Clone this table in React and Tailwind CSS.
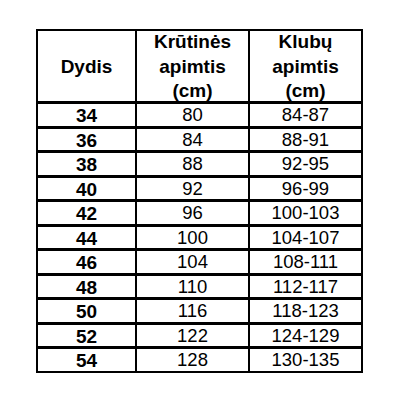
import React from "react";

const rows = [
  ["34", "80", "84-87"],
  ["36", "84", "88-91"],
  ["38", "88", "92-95"],
  ["40", "92", "96-99"],
  ["42", "96", "100-103"],
  ["44", "100", "104-107"],
  ["46", "104", "108-111"],
  ["48", "110", "112-117"],
  ["50", "116", "118-123"],
  ["52", "122", "124-129"],
  ["54", "128", "130-135"],
];

export default function App() {
  return (
    <div
      className="w-[400px] h-[400px] bg-white pl-[36px] pt-[29px] text-black"
      style={{ fontFamily: '"Liberation Sans", Arial, sans-serif' }}
    >
      <div className="w-[327px] border-2 border-black">
        <div className="flex h-[70px]">
          <div className="w-[99px] border-r-2 border-black flex items-center justify-center font-bold text-[19px] leading-[24px] pt-[2px]">
            Dydis
          </div>
          <div className="w-[113px] border-r-[2.5px] border-black flex flex-col items-center justify-center font-bold text-[19px] leading-[24.5px] pt-[2px]">
            <span>Krūtinės</span>
            <span>apimtis</span>
            <span>(cm)</span>
          </div>
          <div className="flex-1 flex flex-col items-center justify-center font-bold text-[19px] leading-[24.5px] pt-[2px]">
            <span>Klubų</span>
            <span>apimtis</span>
            <span>(cm)</span>
          </div>
        </div>
        {rows.map((r) => (
          <div key={r[0]} className="flex h-[24.5px] border-t-[3px] border-black">
            <div className="w-[99px] border-r-2 border-black flex items-center justify-center font-bold text-[19px] leading-none pt-[2px]">
              {r[0]}
            </div>
            <div className="w-[113px] border-r-[2.5px] border-black flex items-center justify-center text-[18.5px] leading-none pt-[1px]">
              {r[1]}
            </div>
            <div className="flex-1 flex items-center justify-center text-[18.5px] leading-none pt-[1px]">
              {r[2]}
            </div>
          </div>
        ))}
      </div>
    </div>
  );
}
